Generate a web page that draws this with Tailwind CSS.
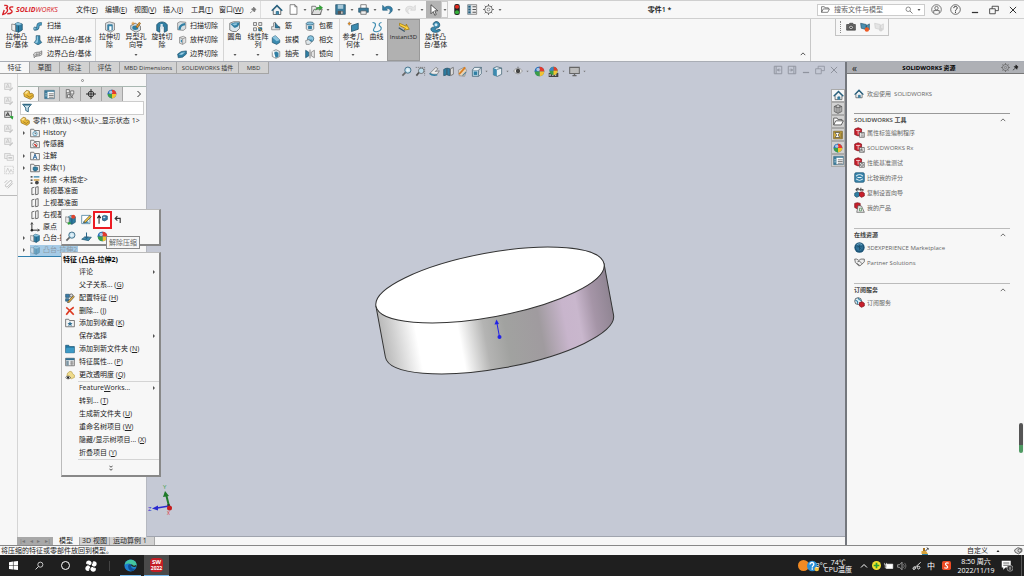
<!DOCTYPE html>
<html lang="zh-CN">
<head>
    <meta charset="UTF-8">
    <meta name="viewport" content="width=device-width, initial-scale=1.0">
    <title>SOLIDWORKS - 零件1</title>
    <script src="https://cdn.jsdelivr.net/npm/@tailwindcss/browser@4"></script>
</head>
<body class="flex flex-col h-screen overflow-hidden bg-[#f7f7f7] text-[#222] text-[7px] leading-[8px] font-['Open_Sans','Noto_Sans_CJK_SC',sans-serif]">

    <!-- icon sprite -->
    <svg class="hidden">
        <defs>
            <symbol id="box" viewBox="0 0 16 16"><path d="M5 4l4-2 6 2v8l-5 3-5-2z" fill="#2f7ea3" stroke="#1d4f68"/><path d="M5 4l5 2 5-2-6-2z" fill="#8cc4de"/><path d="M10 6v9" stroke="#1d4f68"/><path d="M1 4l5 1v9l-5-2z" fill="#eee" stroke="#777"/></symbol>
            <symbol id="box-grey" viewBox="0 0 16 16"><path d="M4 4l6-2 4 2v8l-5 3-5-2z" fill="#e4e4e4" stroke="#777"/><path d="M4 4l5 2 5-2M9 6v9" fill="none" stroke="#777"/><path d="M6 7l2 1v4l-2-1z" fill="#3b8bb0"/></symbol>
            <symbol id="sweep" viewBox="0 0 16 16"><path d="M2 12c5 2 6-1 6-4s2-4 6-3" fill="none" stroke="#235e7b" stroke-width="5"/><path d="M2 12c5 2 6-1 6-4s2-4 6-3" fill="none" stroke="#4d9cc0" stroke-width="3"/><ellipse cx="3" cy="12" rx="2" ry="2.500" fill="#8cc4de" stroke="#235e7b"/></symbol>
            <symbol id="loft" viewBox="0 0 16 16"><path d="M5 1h6v7l3 4-6 4-6-4 3-4z" fill="#3b8bb0" stroke="#1d4f68"/><path d="M6 2h2v9l-2 2-3-1 3-4z" fill="#8cc4de"/></symbol>
            <symbol id="boundary" viewBox="0 0 16 16"><path d="M1 8c4-5 9-1 13-5v6c-4 4-9 0-12 5z" fill="#ddd" stroke="#555"/><path d="M2 11c4-4 8-1 12-5M6 6v6M10 5v6" fill="none" stroke="#777"/></symbol>
            <symbol id="cut" viewBox="0 0 16 16"><path d="M2 3l5-2 7 2v9l-5 3-7-3z" fill="#d8dfe3" stroke="#777"/><path d="M5 5h6v7H5z" fill="#3b8bb0" stroke="#2f6f92"/><path d="M7 7h3v5H7z" fill="#fff"/></symbol>
            <symbol id="hole" viewBox="0 0 16 16"><path d="M1 6l6-3 7 4v5l-6 3-7-4z" fill="#d8dfe3" stroke="#666"/><ellipse cx="7" cy="9" rx="4" ry="3" fill="#2f7ea3"/><path d="M8 8l4-6 2 1-4 6z" fill="#eda23a" stroke="#8b5b16"/><path d="M4 1v5M2 3h5" stroke="#e28a1c"/></symbol>
            <symbol id="revcut" viewBox="0 0 16 16"><path d="M1 13V5c3-5 11-5 14 0v8l-4 2V8c-1-2-5-2-6 0v7z" fill="#2f7ea3" stroke="#1d4f68"/><path d="M6 4h3v7H6z" fill="#d8e6ee"/></symbol>
            <symbol id="sweepcut" viewBox="0 0 16 16"><path d="M1 3l4-2 9 1v10l-4 3-9-1z" fill="#d8dfe3" stroke="#666"/><path d="M4 14c0-6 2-8 9-9" fill="none" stroke="#2f7ea3" stroke-width="4"/></symbol>
            <symbol id="boundcut" viewBox="0 0 16 16"><path d="M1 8l6-4 8-1v5l-6 5-7 1z" fill="#2f7ea3" stroke="#1d4f68"/><path d="M3 9l4-3 6-1-5 4z" fill="#9fd0e6"/></symbol>
            <symbol id="fillet" viewBox="0 0 16 16"><path d="M1 3l5-2h8v9l-4 4H5L1 12z" fill="#dce6ec" stroke="#666"/><path d="M2 4l5-2h7c0 4-3 7-7 7z" fill="#2f7ea3"/><path d="M4 4l4-1h3c0 2-2 3-4 3z" fill="#8cc4de"/></symbol>
            <symbol id="pattern" viewBox="0 0 16 16"><path d="M2 2h4v4H2zM9 2h4v4H9zM2 9h4v4H2z" fill="#e4e4e4" stroke="#666"/><path d="M9 9h4v4H9z" fill="#2f7ea3" stroke="#1d4f68"/><path d="M7 7l8 8" stroke="#e28a1c"/></symbol>
            <symbol id="rib" viewBox="0 0 16 16"><path d="M1 14V9h3V3l3-1v7h7v5z" fill="#e4e4e4" stroke="#666"/><path d="M7 3l7 8H7z" fill="#2f7ea3" stroke="#1d4f68"/></symbol>
            <symbol id="draft" viewBox="0 0 16 16"><path d="M2 4l5-3 7 7v4l-5 3-7-3z" fill="#3b8bb0" stroke="#1d4f68"/><path d="M2 4l5-3 7 7-5 2z" fill="#8cc4de"/></symbol>
            <symbol id="shell" viewBox="0 0 16 16"><path d="M2 4l6-3 6 3v8l-6 3-6-3z" fill="#dfe7eb" stroke="#666"/><path d="M5 6l3-2 4 2v6l-4 2-3-2z" fill="#2f7ea3"/><path d="M3 3l3 10" stroke="#fff" stroke-width="2"/></symbol>
            <symbol id="wrap" viewBox="0 0 16 16"><path d="M2 4v8c0 4 12 4 12 0V4" fill="#dce6ec" stroke="#555"/><ellipse cx="8" cy="4" rx="6" ry="2.500" fill="#8cc4de" stroke="#1d4f68"/><path d="M5 8h6v5H5z" fill="#2f7ea3"/></symbol>
            <symbol id="intersect" viewBox="0 0 16 16"><circle cx="9" cy="6" r="5" fill="#8cc4de" stroke="#1d4f68"/><path d="M1 9l6-2 4 4-4 4H2z" fill="#dfe7eb" stroke="#666"/><path d="M6 8l5-1-1 4z" fill="#2f7ea3"/></symbol>
            <symbol id="mirror" viewBox="0 0 16 16"><path d="M1 2l5 3v6l-5 3z" fill="#2f7ea3" stroke="#1d4f68"/><path d="M15 2l-5 3v6l5 3z" fill="#e4e4e4" stroke="#666"/><path d="M8 1v14" stroke="#444"/></symbol>
            <symbol id="refgeo" viewBox="0 0 16 16"><path d="M6 6l9-3v8l-9 3z" fill="#3b8bb0" stroke="#1d4f68"/><path d="M3 1v5M1 3.500h5" stroke="#444"/><circle cx="3" cy="3.500" r="1.500" fill="#e28a1c"/></symbol>
            <symbol id="curve" viewBox="0 0 16 16"><path d="M2 2c6 0 4 5 2 8s0 5 5 4 6-5 3-7 0-5 2-5" fill="none" stroke="#3b8bb0" stroke-width="1.500"/></symbol>
            <symbol id="instant" viewBox="0 0 16 16"><path d="M2 3l9 4V4l4 7-7 1 2-2-8-4z" fill="#ffd33d" stroke="#a07a10"/><path d="M1 9l8 5" stroke="#34546a" stroke-width="1.500"/></symbol>
            <symbol id="revolve" viewBox="0 0 16 16"><path d="M4 5a4.500 4.500 0 1 1 8 3c-2 2-5 1-5 3s3 1 5 0l2 1c-2 4-10 4-12 1s0-5 4-5" fill="#3b8bb0" stroke="#1d4f68"/><circle cx="8" cy="5" r="2" fill="#d6eaf4"/></symbol>
            <symbol id="home" viewBox="0 0 16 16"><path d="M3 8v6h10V8L8 3z" fill="#eef3f6" stroke="#444"/><path d="M1 9l7-7 7 7" fill="none" stroke="#25607f" stroke-width="2"/><path d="M7 14v-4h3v4" fill="#3b8bb0" stroke="#25607f"/></symbol>
            <symbol id="doc" viewBox="0 0 16 16"><path d="M3 1h7l3 3v11H3z" fill="#fff" stroke="#555"/><path d="M10 1v3h3" fill="none" stroke="#555"/></symbol>
            <symbol id="open" viewBox="0 0 16 16"><path d="M1 14V3h5l1 2h6v9z" fill="#eee" stroke="#555"/><path d="M1 14l3-7h11l-3 7z" fill="#ddd" stroke="#555"/><path d="M6 9c0-4 2-5 5-5V1l5 4-5 4V6c-2 0-3 1-5 3z" fill="#35a03a"/></symbol>
            <symbol id="save" viewBox="0 0 16 16"><path d="M1 1h14v14H1z" fill="#397b9c" stroke="#254f65"/><path d="M4 1h8v6H4z" fill="#a8c8d8"/><path d="M4 10h8v5H4z" fill="#555"/><path d="M9 11h2v3H9z" fill="#ddd"/></symbol>
            <symbol id="print" viewBox="0 0 16 16"><path d="M4 6V1h8v5" fill="#fff" stroke="#555"/><path d="M1 6h14v6H1z" fill="#397b9c" stroke="#254f65"/><path d="M4 10h8v5H4z" fill="#eee" stroke="#555"/></symbol>
            <symbol id="undo" viewBox="0 0 16 16"><path d="M1 2v7h7L6 7c3-1 6 0 6 3 0 2-1 3-2 4 3-1 5-3 5-6 0-5-7-6-11-3z" fill="#3580a8" stroke="#24607f"/></symbol>
            <symbol id="redo" viewBox="0 0 16 16"><path d="M15 2v7H8l2-2c-3-1-6 0-6 3 0 2 1 3 2 4-3-1-5-3-5-6 0-5 7-6 11-3z" fill="#e6e6e6" stroke="#d0d0d0"/></symbol>
            <symbol id="cursor" viewBox="0 0 16 16"><path d="M4 1v12l3-3 2 5 2-1-2-5h4z" fill="#fff" stroke="#333"/></symbol>
            <symbol id="light" viewBox="0 0 16 16"><rect x="4" y="0" width="8" height="16" rx="3" fill="#222"/><circle cx="8" cy="4" r="3" fill="#e32b20"/><circle cx="8" cy="12" r="3" fill="#35b03a"/></symbol>
            <symbol id="form" viewBox="0 0 16 16"><path d="M1 2h14v12H1z" fill="#fff" stroke="#3b5f73"/><path d="M1 2h14v2H1zM1 4h4v10H1z" fill="#3a7a99"/><path d="M7 7h7M7 9.500h7M7 12h7" stroke="#444"/><path d="M2 7h2M2 10h2" stroke="#fff"/></symbol>
            <symbol id="options" viewBox="0 0 16 16"><path d="M1 1h13v14H1z" fill="#eee" stroke="#666"/><path d="M1 1h5v14H1z" fill="#8fa9b8"/><path d="M2 4h3M2 8h3M2 12h3" stroke="#24607f" stroke-width="2"/><path d="M8 4h5M8 8h5M8 12h5" stroke="#555" stroke-width="1.500"/></symbol>
            <symbol id="gear" viewBox="0 0 16 16"><circle cx="8" cy="8" r="5.500" fill="none" stroke="#666" stroke-width="1.300"/><circle cx="8" cy="8" r="2" fill="none" stroke="#666"/><path d="M8 0v3M8 13v3M0 8h3M13 8h3M2.500 2.500l2 2M11.500 11.500l2 2M13.500 2.500l-2 2M4.500 11.500l-2 2" stroke="#666" stroke-width="1.300"/></symbol>
            <symbol id="folder" viewBox="0 0 16 16"><path d="M1 13V3h5l1 2h6v2M1 13l3-6h11l-3 6z" fill="#fff" stroke="#555" stroke-width="1.300"/></symbol>
            <symbol id="magnify" viewBox="0 0 16 16"><circle cx="6.500" cy="6.500" r="4.500" fill="none" stroke="currentColor" stroke-width="1.300"/><path d="M10 10l5 5" stroke="currentColor" stroke-width="1.500"/></symbol>
            <symbol id="user" viewBox="0 0 16 16"><circle cx="8" cy="8" r="7" fill="none" stroke="#444"/><circle cx="8" cy="6" r="2.500" fill="none" stroke="#444"/><path d="M4 13V9.500h8V13" fill="none" stroke="#444"/></symbol>
            <symbol id="help" viewBox="0 0 16 16"><circle cx="8" cy="8" r="7" fill="none" stroke="#333"/><path d="M5.500 6c0-4 5.500-3 5 0-.5 2-2.500 2-2.500 4M8 11v2" fill="none" stroke="#333" stroke-width="1.400"/></symbol>
            <symbol id="min" viewBox="0 0 16 16"><path d="M3 12h10" stroke="currentColor" stroke-width="2"/></symbol>
            <symbol id="restore" viewBox="0 0 16 16"><path d="M5 6V2h10v7h-5M1 6h9v8H1z" fill="none" stroke="currentColor" stroke-width="1.300"/></symbol>
            <symbol id="close" viewBox="0 0 16 16"><path d="M3 3l10 10M13 3L3 13" stroke="currentColor" stroke-width="1.600"/></symbol>
            <symbol id="dock" viewBox="0 0 16 16"><path d="M2 2h12v12H2z" fill="none" stroke="currentColor" stroke-width="1.500"/><path d="M5 2v12M12 8H7m3-2L7 8l3 2" fill="none" stroke="currentColor" stroke-width="1.500"/></symbol>
            <symbol id="camera" viewBox="0 0 16 16"><path d="M1 4h4l1-2h5l1 2h3v9H1z" fill="#666" stroke="#333"/><circle cx="8" cy="8.500" r="3.500" fill="#ddd" stroke="#222"/><circle cx="8" cy="8.500" r="1.500" fill="#333"/></symbol>
            <symbol id="record" viewBox="0 0 16 16"><path d="M1 2l9 2v8L2 10zM10 6l5-3v9l-5-2z" fill="#4b8fb0" stroke="#254f65"/><circle cx="11" cy="12" r="3.500" fill="#ee5a24"/></symbol>
            <symbol id="record-off" viewBox="0 0 16 16"><path d="M1 2l9 2v8L2 10zM10 6l5-3v9l-5-2z" fill="#e4e4e4" stroke="#ccc"/><circle cx="11" cy="12" r="3" fill="#d4d4d4"/></symbol>
            <symbol id="zoomfit" viewBox="0 0 16 16"><path d="M7 9l-5 5" stroke="#666" stroke-width="2.500"/><circle cx="10" cy="6" r="4.500" fill="#bcdcec" stroke="#3d6b84" stroke-width="1.300"/><path d="M10 3v6M7 6h6" stroke="#fff"/></symbol>
            <symbol id="zoomarea" viewBox="0 0 16 16"><path d="M1 2h13v12" fill="none" stroke="#666" stroke-dasharray="2 1"/><path d="M6 9l-4 5" stroke="#555" stroke-width="2.500"/><circle cx="9" cy="7" r="4" fill="#bcdcec" stroke="#555"/></symbol>
            <symbol id="prevview" viewBox="0 0 16 16"><path d="M1 11l9-9 3 2-4 4 6-1-3 5H6z" fill="#eee" stroke="#666"/><path d="M1 11c3 3 6 3 11 2" fill="none" stroke="#2f7ea3" stroke-width="2"/></symbol>
            <symbol id="section" viewBox="0 0 16 16"><path d="M1 5l4-2v10l-4 1zM6 3l4 1v10l-4-1z" fill="#2f7ea3" stroke="#254f65"/><path d="M11 4l4-2v10l-4 2z" fill="#e4e4e4" stroke="#555"/></symbol>
            <symbol id="dynannot" viewBox="0 0 16 16"><path d="M2 6l8-4 4 4-3 9-8-1z" fill="#e6d3b8" stroke="#888"/><path d="M3 12L12 2" stroke="#d97b1c" stroke-width="2.500"/><path d="M8 14l5-5" stroke="#4d7f9a" stroke-width="1.500"/></symbol>
            <symbol id="orient" viewBox="0 0 16 16"><path d="M2 6h9v9H2z" fill="#b7d6e6" stroke="#33576b"/><path d="M2 6l3-4h10l-4 4M15 2v9l-4 4" fill="#e8eef2" stroke="#33576b"/><path d="M4 8h5v5H4z" fill="#2f7ea3"/></symbol>
            <symbol id="cube" viewBox="0 0 16 16"><path d="M2 3l5-2 7 2v9l-6 3-6-2z" fill="#e8eef2" stroke="#33576b"/><path d="M2 3l5 2v10l-5-2z" fill="#3b8bb0"/><path d="M7 5l7-2" stroke="#33576b"/></symbol>
            <symbol id="eye" viewBox="0 0 16 16"><path d="M1 8c4-6 10-6 14 0-4 6-10 6-14 0z" fill="#eee" stroke="#777"/><circle cx="8" cy="8" r="3.500" fill="#444"/><path d="M8 1v3" stroke="#555"/></symbol>
            <symbol id="ball" viewBox="0 0 16 16"><circle cx="8" cy="8" r="7" fill="#2f74b5"/><path d="M8 8V1a7 7 0 0 0-7 7z" fill="#2b70b8"/><path d="M8 8V1a7 7 0 0 1 7 7z" fill="#e23b2e"/><path d="M8 8h7a7 7 0 0 1-7 7z" fill="#f1c232"/><path d="M8 8v7a7 7 0 0 1-7-7z" fill="#3c9e47"/><circle cx="6" cy="5" r="2.500" fill="#fff" opacity=".6"/></symbol>
            <symbol id="scene" viewBox="0 0 16 16"><path d="M1 10h14v6H1z" fill="#444"/><path d="M2 12h2v2H2zM6 12h2v2H6zM10 12h2v2h-2z" fill="#ddd"/><circle cx="8" cy="7" r="6" fill="#3c9e47"/><path d="M8 7V1a6 6 0 0 1 6 6z" fill="#e23b2e"/><path d="M8 7V1a6 6 0 0 0-6 6z" fill="#3d86c6"/><path d="M8 7h6a6 6 0 0 1-6 6z" fill="#f1c232"/></symbol>
            <symbol id="monitor" viewBox="0 0 16 16"><path d="M1 2h14v9H1z" fill="#bbb" stroke="#666" stroke-width="1.500"/><path d="M5 14h6M8 11v3" stroke="#666" stroke-width="2"/></symbol>
            <symbol id="lib" viewBox="0 0 16 16"><path d="M2 4l6-3 6 3v8l-6 3-6-3z" fill="#ccc" stroke="#444"/><path d="M2 4l6 2 6-2M8 6v9M5 2.500v11M11 2.500v11" fill="none" stroke="#444"/></symbol>
            <symbol id="viewpal" viewBox="0 0 16 16"><path d="M1 2h14v12H1z" fill="#d9b240" stroke="#665012"/><path d="M3 4h8L8 8l3 4H3l3-4z" fill="#fff" stroke="#333"/><path d="M13 4v9" stroke="#333"/></symbol>
            <symbol id="part" viewBox="0 0 16 16"><path d="M1 6l4-4 4 1 1 4 3-1 2 2v4l-4 3-9-4z" fill="#e9b93a" stroke="#8d6813"/><path d="M2 6l4-3 2 1-3 3z" fill="#fbe7a4"/><path d="M5 9l5 3 4-3" fill="none" stroke="#8d6813"/></symbol>
            <symbol id="config" viewBox="0 0 16 16"><path d="M2 1h5v5H2zM9 3h5v5H9zM4 9h4v5H4z" fill="#eee" stroke="#444"/><path d="M7 7l6 8M13 9l-4 6M2 6v9" stroke="#444"/></symbol>
            <symbol id="target" viewBox="0 0 16 16"><circle cx="8" cy="8" r="4.500" fill="none" stroke="#222" stroke-width="1.500"/><path d="M8 0v16M0 8h16" stroke="#222" stroke-width="1.500"/></symbol>
            <symbol id="funnel" viewBox="0 0 16 16"><path d="M1 2h14l-5 6v6l-4-2V8z" fill="#cfe4ee" stroke="#235e7b" stroke-width="1.500"/><path d="M3 3h10" stroke="#235e7b" stroke-width="2"/></symbol>
            <symbol id="fbase" viewBox="0 0 16 16"><path d="M1 14V2h5l1 2h8v10z" fill="#f4f4f4" stroke="#555" stroke-width="1.200"/></symbol>
            <symbol id="history" viewBox="0 0 16 16"><use href="#fbase"/><circle cx="8" cy="9" r="3.500" fill="#dcecf4" stroke="#2f7ea3"/><path d="M8 7v2h2" fill="none" stroke="#333"/></symbol>
            <symbol id="sensor" viewBox="0 0 16 16"><use href="#fbase"/><circle cx="8" cy="9" r="3.500" fill="#fff" stroke="#444"/><path d="M7 8l4 4" stroke="#d2281e" stroke-width="2"/></symbol>
            <symbol id="annot" viewBox="0 0 16 16"><use href="#fbase"/><path d="M5 13l3-8 3 8M6 10h4" fill="none" stroke="#215f96" stroke-width="1.400"/></symbol>
            <symbol id="solid" viewBox="0 0 16 16"><use href="#fbase"/><path d="M5 7l3-1 4 1v4l-4 2-3-2z" fill="#2f7ea3" stroke="#1d4f68"/></symbol>
            <symbol id="material" viewBox="0 0 16 16"><path d="M1 3h3M1 8h3M1 13h3" stroke="#222" stroke-width="2"/><path d="M6 3h9" stroke="#2f7ea3" stroke-width="2"/><path d="M6 8h9" stroke="#c98c22" stroke-width="2"/><circle cx="11" cy="12" r="3" fill="#444"/></symbol>
            <symbol id="plane" viewBox="0 0 16 16"><path d="M7 13l-4 1V3l4-1M9 2l4-1v12l-4 1z" fill="none" stroke="#444" stroke-width="1.200"/></symbol>
            <symbol id="origin" viewBox="0 0 16 16"><path d="M3 1v12h12" fill="none" stroke="#222" stroke-width="1.500"/><path d="M1 4l2-3 2 3M12 11l3 2-3 2" fill="none" stroke="#222"/><circle cx="3" cy="13" r="2" fill="#222"/></symbol>
            <symbol id="note" viewBox="0 0 16 16"><path d="M1 2h10v10H1z" fill="#eee" stroke="#bbb"/><path d="M3 10l3-7 3 7M4 8h4" fill="none" stroke="#bbb"/><path d="M9 14l5-5" stroke="#c4c4c4" stroke-width="2"/></symbol>
            <symbol id="note-on" viewBox="0 0 16 16"><path d="M1 2h11v10H1z" fill="#ddd" stroke="#444"/><path d="M3 10l3-6 3 6M4 8h4" fill="none" stroke="#222" stroke-width="1.300"/><path d="M9 9l6 1-1 5-2-1z" fill="#2fa43a"/></symbol>
            <symbol id="note-stack" viewBox="0 0 16 16"><path d="M1 4h9v8H1z" fill="#eee" stroke="#bbb"/><path d="M5 7h10v8H5z" fill="#f4f4f4" stroke="#bbb"/><path d="M7 11h6" stroke="#bbb" stroke-width="2"/></symbol>
            <symbol id="note-dash" viewBox="0 0 16 16"><path d="M1 2h14v12H1z" fill="none" stroke="#bbb" stroke-dasharray="2 1"/><path d="M3 12l3-7 3 7 2-5 3 5" fill="none" stroke="#bbb"/></symbol>
            <symbol id="clip" viewBox="0 0 16 16"><path d="M3 9l6-6c3-2 5 1 3 3l-6 6c-3 2-5-1-3-3zM6 15l8-8M1 6l4-4" fill="none" stroke="#bbb" stroke-width="1.500"/></symbol>
            <symbol id="editfeat" viewBox="0 0 16 16"><use href="#box"/><circle cx="12" cy="4" r="3" fill="#e0442e"/><path d="M4 14l4-1" stroke="#2fa43a" stroke-width="3"/></symbol>
            <symbol id="editsketch" viewBox="0 0 16 16"><path d="M1 2h12v12H1z" fill="#fff" stroke="#2f6f92"/><path d="M3 11h8v2H3z" fill="#3b8bb0"/><path d="M5 10l8-8 2 2-8 8-3 1z" fill="#f1c232" stroke="#444"/></symbol>
            <symbol id="unsuppress" viewBox="0 0 16 16"><path d="M3 14V3M0.500 6L3 2l2.500 4" fill="none" stroke="#222" stroke-width="1.500"/><path d="M8 3l3-1 4 1v5l-4 2-3-1z" fill="#3b7ba8" stroke="#1d4f68"/><path d="M9 4h3v2H9z" fill="#cfe4ee"/></symbol>
            <symbol id="rollback" viewBox="0 0 16 16"><path d="M6 2L2 6l4 4M2 6h9v8" fill="none" stroke="#333" stroke-width="2"/></symbol>
            <symbol id="normal" viewBox="0 0 16 16"><path d="M1 12l4-3h10l-4 5z" fill="#3b8bb0" stroke="#1d4f68"/><path d="M8 11V2M5.500 8L8 11l2.500-3" fill="none" stroke="#2b6688" stroke-width="1.500"/></symbol>
            <symbol id="configfeat" viewBox="0 0 16 16"><path d="M1 2h6v5H1zM1 9h5v4H1z" fill="#3b7ba8" stroke="#1d4f68"/><path d="M5 13L13 4l2 2-8 9-3 1z" fill="#e8b13d" stroke="#444"/><circle cx="10" cy="4" r="2.500" fill="#ddd" stroke="#333"/></symbol>
            <symbol id="delete" viewBox="0 0 16 16"><path d="M2 2c4 3 8 8 12 12M14 2C9 5 5 9 2 14" fill="none" stroke="#dd3a22" stroke-width="2.500"/></symbol>
            <symbol id="fav" viewBox="0 0 16 16"><use href="#fbase"/><path d="M8 5l1.300 3H12l-2 2 .7 3L8 11.300 5.300 13l.7-3-2-2h2.700z" fill="#2f6f92"/></symbol>
            <symbol id="bluefolder" viewBox="0 0 16 16"><path d="M1 14V2h5l1 2h8v10z" fill="#2377a3" stroke="#154e6d"/><path d="M2 6h13l-1 8H1z" fill="#3d9ac6"/></symbol>
            <symbol id="props" viewBox="0 0 16 16"><path d="M1 2h14v12H1z" fill="#eee" stroke="#444"/><path d="M1 2h14v3H1z" fill="#2f6f92"/><path d="M2 6h4v8H2z" fill="#7d96a4"/><path d="M8 8h6M8 11h6M11 6v8" stroke="#666"/></symbol>
            <symbol id="transp" viewBox="0 0 16 16"><path d="M4 5l4-3 3 1 1 3 3 2v4l-5 2-7-4z" fill="#f0dc8c" stroke="#b49a42"/><path d="M1 12c2-3 6-3 8 0-2 3-6 3-8 0z" fill="#eee" stroke="#333"/><circle cx="5" cy="12" r="1.800" fill="#222"/></symbol>
            <symbol id="red" viewBox="0 0 16 16"><path d="M1 3l5-2 5 2v8l-5 2-5-2z" fill="#c8202c" stroke="#7d0f17"/><path d="M3 5h6M6 5v6" stroke="#fff"/><path d="M8 8h7v7H8z" fill="#eee" stroke="#555"/></symbol>
            <symbol id="redtab" viewBox="0 0 16 16"><use href="#red"/><path d="M10 10h4M10 13h4" stroke="#555"/></symbol>
            <symbol id="redrx" viewBox="0 0 16 16"><use href="#red"/><path d="M10 14v-4h2l-1 2 3 2" fill="none" stroke="#444"/></symbol>
            <symbol id="redgauge" viewBox="0 0 16 16"><use href="#red"/><circle cx="11.500" cy="11.500" r="2" fill="none" stroke="#444"/></symbol>
            <symbol id="compare" viewBox="0 0 16 16"><rect x="1" y="1" width="14" height="14" rx="2" fill="#3985ab" stroke="#1d5575"/><path d="M3 6c4-3 6-3 10 0M3 10c4 3 6 3 10 0M5 8h6" fill="none" stroke="#e6f3f9" stroke-width="1.500"/></symbol>
            <symbol id="copyset" viewBox="0 0 16 16"><path d="M1 9l4-2 3 2v4l-4 2-3-2z" fill="#2f7ea3" stroke="#1d4f68"/><path d="M8 8l4-1 3 2v4l-4 2-3-2z" fill="#c8202c" stroke="#7d0f17"/><path d="M4 6V2h3M10 1v5M13 3v3M2 4h11" fill="none" stroke="#333" stroke-width="1.300"/></symbol>
            <symbol id="products" viewBox="0 0 16 16"><path d="M1 2l4-1 4 1v6l-4 2-4-2z" fill="#c8202c" stroke="#7d0f17"/><path d="M6 5l5 1 4 9H4z" fill="#e8e8e8" stroke="#555"/><path d="M8 9h3v4H8z" fill="none" stroke="#4c8d52"/></symbol>
            <symbol id="globe" viewBox="0 0 16 16"><circle cx="8" cy="8" r="7.500" fill="#1d5578"/><circle cx="8" cy="8" r="5" fill="#2f7299"/><path d="M4 7h8M8 4v8M5 5l6 6" stroke="#1a4a66"/><path d="M4 4c3-2 5-2 8 0" fill="none" stroke="#9ccbe2"/></symbol>
            <symbol id="hands" viewBox="0 0 16 16"><path d="M1 3h3l3 2 3-2h5v4l-5 5-3 1-5-5z" fill="#eee" stroke="#444"/><path d="M5 7l3-1 4 4M4 9l4 3" fill="none" stroke="#444"/></symbol>
            <symbol id="subs" viewBox="0 0 16 16"><circle cx="6" cy="6" r="5" fill="#dcecf4" stroke="#333"/><path d="M2 5c3 0 4 2 3 5M6 1c0 3 2 3 5 4" fill="none" stroke="#2f7ea3" stroke-width="1.500"/><path d="M8 8l4-1 3 2v4l-4 2-3-2z" fill="#c8202c" stroke="#7d0f17"/></symbol>
            <symbol id="pin" viewBox="0 0 16 16"><path d="M9 2l5 5-2 1-1 4-6-6 4-1zM7 10l-5 4" fill="currentColor" stroke="currentColor" stroke-width="1.500"/></symbol>
            <symbol id="up" viewBox="0 0 16 16"><path d="M2 11l6-6 6 6" fill="none" stroke="currentColor" stroke-width="2"/></symbol>
            <symbol id="down" viewBox="0 0 8 8"><path d="M1 2h6L4 6z" fill="currentColor"/></symbol>
            <symbol id="tri" viewBox="0 0 8 8"><path d="M2 0v8l4-4z" fill="#555"/></symbol>
        </defs>
    </svg>

    <!-- title bar -->
    <header class="flex items-center h-[19px] shrink-0 border-t border-b border-[#cfcfcf] bg-[#f7f7f7]">
        <div class="flex items-center w-[76px] pl-[2px] gap-[2px] text-[#d8242a]">
            <svg class="w-3 h-3" viewBox="0 0 16 16"><path d="M3 2c5-1 6 2 2 4M6 6c3 1 1 7-5 8l2-6M15 4c-5-1-6 2-3 4s1 5-5 5" fill="none" stroke="#d8242a" stroke-width="1.800"/></svg>
            <div class="italic text-[7px]"><b>SOLID</b>WORKS</div>
        </div>
        <nav class="flex">
            <button class="w-[29px] text-left">文件(<u>F</u>)</button>
            <button class="w-[29px] text-left">编辑(<u>E</u>)</button>
            <button class="w-[29px] text-left">视图(<u>V</u>)</button>
            <button class="w-[28px] text-left">插入(<u>I</u>)</button>
            <button class="w-[28px] text-left">工具(<u>T</u>)</button>
            <button class="w-[30px] text-left">窗口(<u>W</u>)</button>
        </nav>
        <svg class="w-2 h-2 text-[#777]"><use href="#pin"/></svg>
        <div class="flex items-center h-full ml-[3px] pl-[10px] border-l border-[#ddd] text-[#666]">
            <button class="w-[17px]" aria-label="主页"><svg class="w-3 h-3"><use href="#home"/></svg></button>
            <button class="flex items-center gap-1 w-[23px]" aria-label="新建"><svg class="w-[11px] h-[11px]"><use href="#doc"/></svg><svg class="w-1 h-1"><use href="#down"/></svg></button>
            <button class="flex items-center gap-[3px] w-6" aria-label="打开"><svg class="w-3 h-3"><use href="#open"/></svg><svg class="w-1 h-1"><use href="#down"/></svg></button>
            <button class="flex items-center gap-1 w-[23px]" aria-label="保存"><svg class="w-[11px] h-[11px]"><use href="#save"/></svg><svg class="w-1 h-1"><use href="#down"/></svg></button>
            <button class="flex items-center gap-1 w-6" aria-label="打印"><svg class="w-[11px] h-[11px]"><use href="#print"/></svg><svg class="w-1 h-1"><use href="#down"/></svg></button>
            <button class="flex items-center gap-1 w-[23px]" aria-label="撤消"><svg class="w-[11px] h-[11px]"><use href="#undo"/></svg><svg class="w-1 h-1"><use href="#down"/></svg></button>
            <button class="flex items-center gap-1 w-[21px]" aria-label="重做"><svg class="w-[11px] h-[11px]"><use href="#redo"/></svg><svg class="w-1 h-1"><use href="#down"/></svg></button>
            <button class="flex items-center justify-center w-[15px] h-full bg-[#b4b4b4]" aria-label="选择"><svg class="w-3 h-3"><use href="#cursor"/></svg></button>
            <button class="flex items-center justify-center w-[7px] h-full border border-[#ccc]" aria-label="选择选项"><svg class="w-1 h-1"><use href="#down"/></svg></button>
            <button class="w-4 ml-[3px]" aria-label="重建模型"><svg class="w-3 h-[11px]"><use href="#light"/></svg></button>
            <button class="w-4" aria-label="文件属性"><svg class="w-[11px] h-[11px]"><use href="#options"/></svg></button>
            <button class="flex items-center gap-1" aria-label="选项"><svg class="w-[11px] h-[11px]"><use href="#gear"/></svg><svg class="w-1 h-1"><use href="#down"/></svg></button>
        </div>
        <h1 class="flex-1 text-center font-semibold">零件1 *</h1>
        <label class="flex items-center gap-1 w-[108px] h-3 px-[3px] bg-white border border-[#ccc] text-[#555]">
            <svg class="w-[9px] h-[9px] shrink-0"><use href="#folder"/></svg>
            <input class="flex-1 min-w-0 h-[10px] outline-none placeholder:text-[#666]" type="text" placeholder="搜索文件与模型" aria-label="搜索文件与模型">
            <svg class="w-2 h-2 shrink-0"><use href="#magnify"/></svg>
            <svg class="w-1 h-1 shrink-0"><use href="#down"/></svg>
        </label>
        <div class="flex items-center gap-2 px-[6px] text-[#333]">
            <button aria-label="登录"><svg class="w-[11px] h-[11px]"><use href="#user"/></svg></button>
            <button aria-label="帮助"><svg class="w-[11px] h-[11px]"><use href="#help"/></svg></button>
            <button class="px-px" aria-label="最小化"><svg class="w-[10px] h-[10px]"><use href="#min"/></svg></button>
            <button class="pr-px" aria-label="还原"><svg class="w-[10px] h-[10px]"><use href="#restore"/></svg></button>
            <button aria-label="关闭"><svg class="w-[10px] h-[10px]"><use href="#close"/></svg></button>
        </div>
    </header>

    <!-- ribbon -->
    <section class="flex h-[43px] shrink-0 border-b border-[#a9adb5]">
        <div class="flex flex-1 border-r border-[#c8c8c8]">
            <button class="flex flex-col items-center w-[33px] pt-[2px]"><svg class="w-3 h-3"><use href="#box"/></svg>拉伸凸<br>台/基体</button>
            <div class="flex flex-col justify-around w-[63px] border-r border-[#d5d5d5]">
                <button class="flex items-center gap-1"><svg class="w-[10px] h-[10px]"><use href="#sweep"/></svg>扫描</button>
                <button class="flex items-center gap-1"><svg class="w-[10px] h-[10px]"><use href="#loft"/></svg>放样凸台/基体</button>
                <button class="flex items-center gap-1"><svg class="w-[10px] h-[10px]"><use href="#boundary"/></svg>边界凸台/基体</button>
            </div>
            <button class="flex flex-col items-center w-[27px] pt-[2px]"><svg class="w-3 h-3"><use href="#cut"/></svg>拉伸切<br>除</button>
            <button class="flex flex-col items-center w-[26px] pt-[2px]"><svg class="w-3 h-3"><use href="#hole"/></svg>异型孔<br>向导<svg class="w-1 h-1 mt-1 text-[#555]"><use href="#down"/></svg></button>
            <button class="flex flex-col items-center w-[26px] pt-[2px]"><svg class="w-3 h-3"><use href="#revcut"/></svg>旋转切<br>除</button>
            <div class="flex flex-col justify-around w-[49px] pl-[2px] border-r border-[#d5d5d5]">
                <button class="flex items-center gap-[3px]"><svg class="w-[10px] h-[10px]"><use href="#sweepcut"/></svg>扫描切除</button>
                <button class="flex items-center gap-[3px]"><svg class="w-[10px] h-[10px]"><use href="#box-grey"/></svg>放样切除</button>
                <button class="flex items-center gap-[3px]"><svg class="w-[10px] h-[10px]"><use href="#boundcut"/></svg>边界切除</button>
            </div>
            <button class="flex flex-col items-center w-[21px] pt-[2px]"><svg class="w-3 h-3"><use href="#fillet"/></svg>圆角<svg class="w-1 h-1 mt-3 text-[#555]"><use href="#down"/></svg></button>
            <button class="flex flex-col items-center w-[26px] pt-[2px]"><svg class="w-3 h-3"><use href="#pattern"/></svg>线性阵<br>列<svg class="w-1 h-1 mt-1 text-[#555]"><use href="#down"/></svg></button>
            <div class="flex flex-col justify-around w-[34px]">
                <button class="flex items-center gap-1"><svg class="w-[10px] h-[10px]"><use href="#rib"/></svg>筋</button>
                <button class="flex items-center gap-1"><svg class="w-[10px] h-[10px]"><use href="#draft"/></svg>拔模</button>
                <button class="flex items-center gap-1"><svg class="w-[10px] h-[10px]"><use href="#shell"/></svg>抽壳</button>
            </div>
            <div class="flex flex-col justify-around w-[35px] border-r border-[#d5d5d5]">
                <button class="flex items-center gap-1"><svg class="w-[10px] h-[10px]"><use href="#wrap"/></svg>包覆</button>
                <button class="flex items-center gap-1"><svg class="w-[10px] h-[10px]"><use href="#intersect"/></svg>相交</button>
                <button class="flex items-center gap-1"><svg class="w-[10px] h-[10px]"><use href="#mirror"/></svg>镜向</button>
            </div>
            <button class="flex flex-col items-center w-[26px] pt-[2px]"><svg class="w-3 h-3"><use href="#refgeo"/></svg>参考几<br>何体<svg class="w-1 h-1 mt-1 text-[#555]"><use href="#down"/></svg></button>
            <button class="flex flex-col items-center w-[21px] pt-[2px]"><svg class="w-3 h-3"><use href="#curve"/></svg>曲线<svg class="w-1 h-1 mt-3 text-[#555]"><use href="#down"/></svg></button>
            <button class="flex flex-col items-center w-[33px] pt-px text-[6px] bg-[#b1b1b1] border border-[#999]"><svg class="w-3 h-3"><use href="#instant"/></svg>Instant3D</button>
            <button class="flex flex-col items-center w-[31px] pt-[2px]"><svg class="w-3 h-3"><use href="#revolve"/></svg>旋转凸<br>台/基体</button>
            <button class="self-end ml-auto mr-1 mb-1" aria-label="折叠"><svg class="w-[6px] h-[6px]"><use href="#up"/></svg></button>
        </div>
        <div class="flex items-start w-[213px] pl-6">
            <div class="flex items-center gap-1 h-[17px] px-1 border border-t-0 border-[#c4c4c4]">
                <span class="w-[2px] h-3 border-l border-dotted border-[#888]"></span>
                <button aria-label="捕获"><svg class="w-[10px] h-[10px]"><use href="#camera"/></svg></button>
                <button aria-label="录制"><svg class="w-[10px] h-[10px]"><use href="#record"/></svg></button>
                <button aria-label="停止" disabled><svg class="w-[10px] h-[10px]"><use href="#record-off"/></svg></button>
            </div>
        </div>
    </section>

    <main class="flex flex-1 min-h-0">
        <div class="flex flex-col flex-1 min-w-0 bg-[#c5c9d5]">
            <!-- command tabs and view toolbar -->
            <div class="relative z-10 flex h-3 shrink-0">
                <nav class="flex text-[#333] [&>button]:border-r [&>button]:border-b [&>button]:border-[#a5a5a5]">
                    <button class="w-[30px] bg-[#f7f7f7]">特征</button>
                    <button class="w-[30px] bg-[#d2d2d2]">草图</button>
                    <button class="w-[30px] bg-[#d2d2d2]">标注</button>
                    <button class="w-[30px] bg-[#d2d2d2]">评估</button>
                    <button class="w-[57px] bg-[#d2d2d2] text-[6px] whitespace-nowrap">MBD Dimensions</button>
                    <button class="w-[62px] bg-[#d2d2d2] text-[6px] whitespace-nowrap">SOLIDWORKS 插件</button>
                    <button class="w-[30px] bg-[#d2d2d2] text-[6px]">MBD</button>
                </nav>
                <div class="flex items-center h-[18px] ml-[132px] gap-[3px] text-[#777] [&>svg]:w-[11px] [&>svg]:h-[11px]">
                    <svg><use href="#zoomfit"/></svg>
                    <svg><use href="#zoomarea"/></svg>
                    <svg><use href="#prevview"/></svg>
                    <svg><use href="#section"/></svg>
                    <svg><use href="#dynannot"/></svg>
                    <button class="flex items-center gap-[3px] w-[18px]" aria-label="视图定向"><svg class="w-[11px] h-[11px]"><use href="#orient"/></svg><svg class="w-[3px] h-[3px]"><use href="#down"/></svg></button>
                    <button class="flex items-center gap-[3px] w-[18px]" aria-label="显示样式"><svg class="w-[11px] h-[11px]"><use href="#cube"/></svg><svg class="w-[3px] h-[3px]"><use href="#down"/></svg></button>
                    <button class="flex items-center gap-[3px] w-[18px]" aria-label="隐藏项目"><svg class="w-[10px] h-[10px]"><use href="#eye"/></svg><svg class="w-[3px] h-[3px]"><use href="#down"/></svg></button>
                    <svg><use href="#ball"/></svg>
                    <button class="flex items-center gap-[3px] w-[18px]" aria-label="布景"><svg class="w-[11px] h-[11px]"><use href="#scene"/></svg><svg class="w-[3px] h-[3px]"><use href="#down"/></svg></button>
                    <button class="flex items-center gap-[3px] w-[18px]" aria-label="视图设定"><svg class="w-[11px] h-[11px]"><use href="#monitor"/></svg><svg class="w-[3px] h-[3px]"><use href="#down"/></svg></button>
                </div>
                <div class="flex items-center h-4 ml-auto pr-[6px] gap-1 text-[#8f939e]">
                    <button aria-label="左侧"><svg class="w-[10px] h-[10px]"><use href="#dock"/></svg></button>
                    <button aria-label="右侧"><svg class="w-[10px] h-[10px] -scale-x-100"><use href="#dock"/></svg></button>
                    <button aria-label="最小化文档"><svg class="w-[10px] h-[10px]"><use href="#min"/></svg></button>
                    <button aria-label="还原文档"><svg class="w-[10px] h-[10px]"><use href="#restore"/></svg></button>
                    <button aria-label="关闭文档"><svg class="w-[10px] h-[10px]"><use href="#close"/></svg></button>
                </div>
            </div>

            <div class="flex flex-1 min-h-0">
                <!-- annotation toolbar -->
                <div class="w-[18px] bg-[#f7f7f7] border-r border-[#d5d5d5]">
                    <div class="flex flex-col items-center justify-between h-[122px] pt-2 pb-[6px] border-b border-[#bbb] [&>svg]:w-[10px] [&>svg]:h-[10px]">
                        <svg><use href="#note"/></svg>
                        <svg><use href="#note"/></svg>
                        <svg><use href="#note-on"/></svg>
                        <svg><use href="#note"/></svg>
                        <svg><use href="#note"/></svg>
                        <svg><use href="#note-stack"/></svg>
                        <svg><use href="#note-dash"/></svg>
                        <svg><use href="#clip"/></svg>
                    </div>
                </div>

                <!-- feature manager -->
                <aside class="w-[129px] bg-[#f7f7f7] border-r border-[#b5b8c0]">
                    <div class="flex items-center justify-center h-[13px] border-b border-[#a9b8b2]"><span class="w-[3px] h-[3px] rounded-full border border-[#888]"></span></div>
                    <div class="flex h-[14px] items-stretch [&>button]:flex [&>button]:items-center [&>button]:justify-center [&>button]:w-[21px] [&>button]:border-r [&>button]:border-[#a5a5a5]">
                        <button class="bg-[#f7f7f7]" aria-label="设计树"><svg class="w-[11px] h-[11px]"><use href="#part"/></svg></button>
                        <button class="bg-[#d2d2d2]" aria-label="属性"><svg class="w-[11px] h-[11px]"><use href="#form"/></svg></button>
                        <button class="bg-[#d2d2d2]" aria-label="配置"><svg class="w-[10px] h-[10px]"><use href="#config"/></svg></button>
                        <button class="bg-[#d2d2d2]" aria-label="尺寸专家"><svg class="w-[10px] h-[10px]"><use href="#target"/></svg></button>
                        <button class="bg-[#d2d2d2]" aria-label="外观"><svg class="w-[10px] h-[10px]"><use href="#ball"/></svg></button>
                        <span class="ml-auto mr-[3px] self-center"><svg class="w-2 h-2 rotate-90 text-[#333]"><use href="#up"/></svg></span>
                    </div>
                    <label class="flex items-center h-[14px] mx-[2px] pl-px bg-white border border-[#ccc]">
                        <svg class="w-[10px] h-[10px]"><use href="#funnel"/></svg>
                        <input class="flex-1 min-w-0 outline-none" type="text" aria-label="过滤">
                    </label>
                    <ul class="grid auto-rows-fr h-[141px] [&>li]:flex [&>li]:items-center [&>li]:gap-[3px] [&>li]:whitespace-nowrap [&_svg]:shrink-0">
                        <li class="pl-[2px]"><svg class="w-[10px] h-[10px]"><use href="#part"/></svg>零件1 (默认) &lt;&lt;默认&gt;_显示状态 1&gt;</li>
                        <li class="pl-1"><svg class="w-1 h-1 mr-px"><use href="#tri"/></svg><svg class="w-[10px] h-[10px]"><use href="#history"/></svg>History</li>
                        <li class="pl-3"><svg class="w-[10px] h-[10px]"><use href="#sensor"/></svg>传感器</li>
                        <li class="pl-1"><svg class="w-1 h-1 mr-px"><use href="#tri"/></svg><svg class="w-[10px] h-[10px]"><use href="#annot"/></svg>注解</li>
                        <li class="pl-1"><svg class="w-1 h-1 mr-px"><use href="#tri"/></svg><svg class="w-[10px] h-[10px]"><use href="#solid"/></svg>实体(1)</li>
                        <li class="pl-3"><svg class="w-[10px] h-[10px]"><use href="#material"/></svg>材质 &lt;未指定&gt;</li>
                        <li class="pl-3"><svg class="w-[10px] h-[10px]"><use href="#plane"/></svg>前视基准面</li>
                        <li class="pl-3"><svg class="w-[10px] h-[10px]"><use href="#plane"/></svg>上视基准面</li>
                        <li class="pl-3"><svg class="w-[10px] h-[10px]"><use href="#plane"/></svg>右视基准面</li>
                        <li class="pl-3"><svg class="w-[10px] h-[10px]"><use href="#origin"/></svg>原点</li>
                        <li class="pl-1"><svg class="w-1 h-1 mr-px"><use href="#tri"/></svg><svg class="w-[10px] h-[10px]"><use href="#box"/></svg>凸台-拉伸1</li>
                        <li class="pl-1 text-[#8a9aa6]"><svg class="w-1 h-1 mr-px"><use href="#tri"/></svg><span class="flex items-center gap-[3px] w-12 h-[11px] bg-[#a5cbe6]"><svg class="w-[10px] h-[10px] opacity-50"><use href="#box"/></svg>凸台-拉伸2</span></li>
                    </ul>
                    <div class="h-px bg-[#2f7fae]"></div>
                </aside>

                <!-- graphics area -->
                <div class="relative flex-1 min-w-0 flex justify-end border-b border-[#a0a4ae]">
                    <svg class="absolute inset-0 w-full h-full" viewBox="147 74 698 462">
                        <defs>
                            <linearGradient id="side">
                                <stop offset="0" stop-color="#b9b9b9"/>
                                <stop offset=".05" stop-color="#cfcfcf"/>
                                <stop offset=".15" stop-color="#fff"/>
                                <stop offset=".33" stop-color="#fff"/>
                                <stop offset=".44" stop-color="#b4b4b3"/>
                                <stop offset=".53" stop-color="#a1a2a0"/>
                                <stop offset=".68" stop-color="#a09b9f"/>
                                <stop offset=".79" stop-color="#c8b5cc"/>
                                <stop offset=".85" stop-color="#c9b7cd"/>
                                <stop offset=".92" stop-color="#a595a7"/>
                                <stop offset="1" stop-color="#908593"/>
                            </linearGradient>
                        </defs>
                        <g transform="translate(490 285) rotate(-10.500)" stroke="#333">
                            <path d="M-116 0V52A116 32 0 0 0 116 52V0z" fill="url(#side)"/>
                            <ellipse rx="116" ry="32" fill="#fff"/>
                        </g>
                        <path d="M499.500 337l-3-16" stroke="#2222e8"/>
                        <path d="M494.500 324.500l2-5 2.500 4.500z" fill="#2222e8"/>
                        <circle cx="499.500" cy="337" r="2" fill="#2222e8"/>
                    </svg>
                    <svg class="absolute left-0 bottom-[18px] w-8 h-9" viewBox="0 0 32 36">
                        <path d="M22 24l-3-12" stroke="#1f7a2a" stroke-width="2"/><path d="M16 15l2-6 4 5z" fill="#1f7a2a"/>
                        <path d="M22 24l-12 2" stroke="#2a2ad0" stroke-width="1.500"/><path d="M11 23.500l-6 3 6 2z" fill="#2a2ad0"/>
                        <circle cx="22.500" cy="26" r="2.500" fill="#c41c1c"/><path d="M20 23h3" stroke="#222"/>
                        <text x="16" y="7" font-size="6" fill="#3fa048">Y</text>
                        <text x="1" y="29" font-size="6" fill="#2a2ad0">Z</text>
                        <text x="20" y="33" font-size="5" fill="#e03030">X</text>
                    </svg>
                    <div class="relative flex flex-col self-start w-[14px] mt-[15px] [&>button]:flex [&>button]:items-center [&>button]:justify-center [&>button]:h-[13px] [&>button]:border [&>button]:border-[#aaa]">
                        <button class="bg-[#f7f7f7]" aria-label="资源"><svg class="w-[11px] h-[11px]"><use href="#home"/></svg></button>
                        <button class="bg-[#d2d2d2]" aria-label="设计库"><svg class="w-[10px] h-[10px]"><use href="#lib"/></svg></button>
                        <button class="bg-[#d2d2d2]" aria-label="文件探索器"><svg class="w-[11px] h-[11px]"><use href="#folder"/></svg></button>
                        <button class="bg-[#d2d2d2]" aria-label="视图调色板"><svg class="w-[10px] h-[10px]"><use href="#viewpal"/></svg></button>
                        <button class="bg-[#d2d2d2]" aria-label="外观、布景"><svg class="w-[10px] h-[10px]"><use href="#ball"/></svg></button>
                        <button class="bg-[#d2d2d2]" aria-label="自定义属性"><svg class="w-[11px] h-[11px]"><use href="#form"/></svg></button>
                    </div>
                </div>
            </div>

            <!-- document tabs -->
            <div class="flex h-2 shrink-0 pl-[17px] bg-[#f7f7f7]">
                <div class="flex items-center justify-around w-9 bg-[#a8a8a8] text-[#777] text-[6px]"><span>|◂</span><span>◂</span><span>▸</span><span>▸|</span></div>
                <button class="w-[26px] bg-[#f7f7f7]">模型</button>
                <button class="w-[31px] bg-[#d2d2d2] border-x border-[#aaa] whitespace-nowrap">3D 视图</button>
                <button class="w-[45px] bg-[#d2d2d2] border-r border-[#aaa] text-left pl-[3px] whitespace-nowrap">运动算例 1</button>
            </div>
        </div>

        <!-- task pane -->
        <aside class="relative w-[179px] border-l-2 border-[#74777d] bg-[#f7f7f7]">
            <div class="flex items-center h-3 px-[5px] bg-[#aeb0b5] border-b border-[#777]">
                <span class="text-[10px]">«</span>
                <h2 class="flex-1 text-center text-[6px] font-bold text-black">SOLIDWORKS 资源</h2>
                <svg class="w-[9px] h-[9px] mr-[2px]"><use href="#gear"/></svg>
                <svg class="w-[7px] h-[7px] text-[#222]"><use href="#pin"/></svg>
            </div>
            <div class="pl-[7px] pr-[14px] text-[6px] text-[#666]">
                <a href="#" class="flex items-center gap-[3px] h-[11px] mt-[14px]"><svg class="w-[10px] h-[10px]"><use href="#home"/></svg>欢迎使用&nbsp; SOLIDWORKS</a>
                <section class="mt-[14px] border-t border-[#999]">
                    <h3 class="flex items-center justify-between h-[11px] pr-1 font-semibold text-[#444]">SOLIDWORKS 工具<svg class="w-[6px] h-[6px]"><use href="#up"/></svg></h3>
                    <ul class="[&_a]:flex [&_a]:items-center [&_a]:gap-[2px] [&_a]:h-[15px] [&_svg]:w-[11px] [&_svg]:h-[11px]">
                        <li><a href="#"><svg><use href="#redtab"/></svg>属性标签编制程序</a></li>
                        <li><a href="#"><svg><use href="#redrx"/></svg>SOLIDWORKS Rx</a></li>
                        <li><a href="#"><svg><use href="#redgauge"/></svg>性能基准测试</a></li>
                        <li><a href="#"><svg><use href="#compare"/></svg>比较我的评分</a></li>
                        <li><a href="#"><svg><use href="#copyset"/></svg>复制设置向导</a></li>
                        <li><a href="#"><svg><use href="#products"/></svg>我的产品</a></li>
                    </ul>
                </section>
                <section class="mt-[13px] border-t border-[#bbb]">
                    <h3 class="flex items-center justify-between h-[11px] pr-1 font-semibold text-[#444]">在线资源<svg class="w-[6px] h-[6px]"><use href="#up"/></svg></h3>
                    <ul class="[&_a]:flex [&_a]:items-center [&_a]:gap-[2px] [&_a]:h-[15px] [&_svg]:w-[11px] [&_svg]:h-[11px]">
                        <li><a href="#"><svg><use href="#globe"/></svg>3DEXPERIENCE Marketplace</a></li>
                        <li><a href="#"><svg><use href="#hands"/></svg>Partner Solutions</a></li>
                    </ul>
                </section>
                <section class="mt-[13px] border-t border-[#bbb]">
                    <h3 class="flex items-center justify-between h-[11px] pr-1 font-semibold text-[#444]">订阅服务<svg class="w-[6px] h-[6px]"><use href="#up"/></svg></h3>
                    <a href="#" class="flex items-center gap-[2px] h-[15px]"><svg class="w-[11px] h-[11px]"><use href="#subs"/></svg>订阅服务</a>
                </section>
            </div>
            <div class="absolute right-px bottom-[92px] w-1 h-[30px] rounded-sm bg-[#555] border-b-8 border-[#4f9a63]"></div>
        </aside>
    </main>

    <!-- status bar -->
    <footer class="flex items-center h-[10px] shrink-0 border-t border-[#888] pl-px">
        <span>将压缩的特征或零部件放回到模型。</span>
        <svg class="w-2 h-2 ml-auto" viewBox="0 0 16 16"><path d="M1 8h9l4 6H1z" fill="#d9a43a"/><path d="M4 2h4v6H4z" fill="#a5701c"/><path d="M9 8l6-6M12 1l3 4" stroke="#333" stroke-width="2"/><path d="M2 15h12" stroke="#2f7ea3" stroke-width="2"/></svg>
        <span class="ml-[38px]">自定义</span>
        <svg class="w-1 h-1 ml-2 rotate-180"><use href="#down"/></svg>
        <svg class="w-[9px] h-[9px] ml-[14px] mr-px" viewBox="0 0 16 16"><path d="M1 7l6-4 7 2v5l-6 4-6-3z" fill="#ddd" stroke="#555" stroke-width="1.500"/><circle cx="10" cy="8" r="3" fill="none" stroke="#555" stroke-width="1.500"/></svg>
    </footer>

    <!-- windows taskbar -->
    <div class="flex items-center h-[21px] shrink-0 bg-[#1f1f1f] text-white">
        <button class="flex justify-center w-[26px]" aria-label="开始"><svg class="w-[9px] h-[9px]" viewBox="0 0 16 16"><path d="M0 2l7-1v7H0zM8 1l8-1v8H8zM0 9h7v6l-7-1zM8 9h8v7l-8-1z" fill="#fff"/></svg></button>
        <button class="flex justify-center w-[26px]" aria-label="搜索"><svg class="w-[9px] h-[9px] -scale-x-100"><use href="#magnify"/></svg></button>
        <button class="flex justify-center w-[26px]" aria-label="助手"><span class="w-[9px] h-[9px] rounded-full border border-white"></span></button>
        <button class="flex justify-center w-[26px]" aria-label="应用"><svg class="w-3 h-3" viewBox="0 0 16 16"><circle cx="5" cy="4" r="3.500" fill="#fff"/><circle cx="12" cy="5" r="3.500" fill="#fff"/><circle cx="11" cy="12" r="3.500" fill="#fff"/><circle cx="4" cy="11" r="3.500" fill="#fff"/><path d="M8 8c-3 0-3-3-7-2M8 8c0-3 3-3 2-7M8 8c3 0 3 3 7 2M8 8c0 3-3 3-2 7" fill="none" stroke="#1f1f1f" stroke-width="1.300"/></svg></button>
        <span class="w-px h-[10px] ml-[5px] mr-[10px] bg-[#444]"></span>
        <button class="flex items-center justify-center w-[21px] h-full border-b border-[#76b9ed]" aria-label="Edge"><svg class="w-[13px] h-[13px]" viewBox="0 0 16 16"><circle cx="8" cy="8" r="7.500" fill="#1e7fd0"/><path d="M1 7C2-1 15-1 15.500 7c0 3-4 4-6 2 1-3-4-5-8.500-2z" fill="#43c6a0"/><path d="M5 9c0-3 4-3 4-1-1 4 3 4 5 4-3 5-9 3-9-3z" fill="#0f4f96"/><path d="M9 7c2 3 5 2 6 1" fill="none" stroke="#1f1f1f" stroke-width="1.500"/></svg></button>
        <button class="flex items-center justify-center w-[25px] h-full ml-[3px] bg-[#4a4a4a] border-b border-[#76b9ed]" aria-label="SOLIDWORKS">
            <span class="flex flex-col items-center justify-center w-[13px] h-[14px] rounded-sm bg-[#c41e25] text-[6px] leading-[6px] font-bold"><span>SW</span><span class="text-[5px]">2022</span></span>
        </button>
        <div class="flex items-center ml-auto mr-2">
            <span class="w-[11px] h-[11px] rounded-full bg-[#f08a24]"></span>
            <svg class="w-3 h-3 -ml-[2px]" viewBox="0 0 16 16"><circle cx="7" cy="8" r="7" fill="#2b8fd6"/><path d="M4 6c0-4 6-3 5 0-.5 2-2 2-2 4M7 11v2" fill="none" stroke="#fff" stroke-width="1.800"/><circle cx="13" cy="12" r="3" fill="#f6c443"/></svg>
            <span class="-ml-[3px]">3°C</span>
            <span class="flex flex-col items-center -ml-[3px] leading-[7px] whitespace-nowrap"><span>74℃</span><span>CPU温度</span></span>
        </div>
        <svg class="w-2 h-2 shrink-0"><use href="#up"/></svg>
        <svg class="w-[9px] h-[9px] ml-1 shrink-0" viewBox="0 0 16 16"><circle cx="8" cy="8" r="8" fill="#f2e12e"/><path d="M8 3v10M3 8h10" stroke="#2c9f36" stroke-width="3"/></svg>
        <svg class="w-[10px] h-[10px] ml-[3px] shrink-0" viewBox="0 0 16 16"><path d="M4 5h10v7H4z" fill="#fff" stroke="#fff"/><path d="M1 3v3h3V3M2 6v5h3" fill="none" stroke="#fff"/></svg>
        <svg class="w-[10px] h-[10px] ml-[3px] shrink-0" viewBox="0 0 16 16"><path d="M1 6h3l4-4v12l-4-4H1z" fill="none" stroke="#ddd"/><path d="M10 5c2 2 2 4 0 6M12 3c3 3 3 7 0 10" fill="none" stroke="#999"/></svg>
        <svg class="w-[10px] h-[10px] ml-[5px] shrink-0" viewBox="0 0 16 16"><path d="M2 13c-2-3 3-5 4-3s-3 5-4 3l12-11M8 9c4-2 6 1 4 3s-4 0-3-2" fill="none" stroke="#fff" stroke-width="1.300"/></svg>
        <span class="ml-[5px] text-[8px]">中</span>
        <svg class="w-[9px] h-[9px] ml-[7px] shrink-0" viewBox="0 0 16 16"><rect width="16" height="16" rx="3" fill="#ee4b24"/><path d="M12 4C7 2 4 5 8 8s2 6-4 4" fill="none" stroke="#fff" stroke-width="2"/></svg>
        <div class="ml-[6px] w-[38px] text-center leading-[9px]">8:50 周六<br>2022/11/19</div>
        <button class="flex items-center ml-[6px] mr-[2px] pr-2 h-full border-r border-[#555]" aria-label="通知"><svg class="w-3 h-3" viewBox="0 0 16 16"><path d="M1 1h12v9H6l-3 3v-3H1z" fill="#fff"/><path d="M3 4h8M3 7h8" stroke="#333"/><circle cx="12" cy="11" r="4" fill="#333" stroke="#aaa"/><path d="M12 9v4" stroke="#fff"/></svg></button>
    </div>

    <!-- context toolbar -->
    <div class="absolute z-20 left-[61px] top-[209px] w-[100px] h-[37px] bg-[#f7f7f7] border border-[#bbb] border-r-2 border-b-2 border-r-[#888] border-b-[#888]">
        <div class="grid grid-cols-6 auto-rows-[17px] pt-px place-items-center">
            <button aria-label="编辑特征"><svg class="w-[11px] h-[11px]"><use href="#editfeat"/></svg></button>
            <button aria-label="编辑草图"><svg class="w-[11px] h-[11px]"><use href="#editsketch"/></svg></button>
            <button class="flex items-center justify-center w-[19px] h-[18px] border-2 border-[#ed1c24] bg-white" aria-label="解除压缩"><svg class="w-[11px] h-[11px]"><use href="#unsuppress"/></svg></button>
            <button aria-label="退回"><svg class="w-[9px] h-[9px]"><use href="#rollback"/></svg></button>
            <span></span><span></span>
            <button aria-label="放大所选"><svg class="w-[11px] h-[11px]"><use href="#zoomfit"/></svg></button>
            <button aria-label="正视于"><svg class="w-[11px] h-[11px]"><use href="#normal"/></svg></button>
            <button aria-label="外观"><svg class="w-[11px] h-[11px]"><use href="#ball"/></svg></button>
        </div>
        <div class="absolute left-[44px] top-[26px] px-[2px] py-px leading-[9px] whitespace-nowrap bg-[#f7f7f7] border border-[#888] text-[#666]" role="tooltip">解除压缩</div>
    </div>

    <!-- context menu -->
    <div class="absolute z-10 left-[61px] top-[252px] w-[100px] bg-[#f7f7f7] border border-[#bbb] border-r-2 border-b-2 border-r-[#888] border-b-[#888]">
        <h3 class="h-[13px] pl-px leading-[13px] font-bold text-black">特征 (凸台-拉伸2)</h3>
        <div class="grid auto-rows-fr h-[115px] [&>button]:flex [&>button]:items-center [&>button]:px-[3px] [&>button>span]:flex-1 [&>button>span]:text-left [&>button]:whitespace-nowrap">
            <button class="pl-[17px]!"><span>评论</span><svg class="w-1 h-1"><use href="#tri"/></svg></button>
            <button class="pl-[17px]!"><span>父子关系... (<u>G</u>)</span></button>
            <button class="gap-1"><svg class="w-[10px] h-[10px]"><use href="#configfeat"/></svg><span>配置特征 (<u>H</u>)</span></button>
            <button class="gap-1"><svg class="w-[10px] h-[10px]"><use href="#delete"/></svg><span>删除... (<u>J</u>)</span></button>
            <button class="gap-1"><svg class="w-[10px] h-[10px]"><use href="#fav"/></svg><span>添加到收藏 (<u>K</u>)</span></button>
            <button class="pl-[17px]!"><span>保存选择</span><svg class="w-1 h-1"><use href="#tri"/></svg></button>
            <button class="gap-1"><svg class="w-[10px] h-[10px]"><use href="#bluefolder"/></svg><span>添加到新文件夹 (<u>N</u>)</span></button>
            <button class="gap-1"><svg class="w-[10px] h-[10px]"><use href="#props"/></svg><span>特征属性... (<u>P</u>)</span></button>
            <button class="gap-1"><svg class="w-[10px] h-[10px]"><use href="#transp"/></svg><span>更改透明度 (<u>Q</u>)</span></button>
        </div>
        <div class="ml-4 border-t border-[#d4d4d4]"></div>
        <div class="grid auto-rows-fr h-[77px] [&>button]:flex [&>button]:items-center [&>button]:pl-[17px] [&>button]:pr-[3px] [&>button>span]:flex-1 [&>button>span]:text-left [&>button]:whitespace-nowrap">
            <button><span>Feature<u>W</u>orks...</span><svg class="w-1 h-1"><use href="#tri"/></svg></button>
            <button><span>转到... (<u>T</u>)</span></button>
            <button><span>生成新文件夹 (<u>U</u>)</span></button>
            <button><span>重命名树项目 (<u>W</u>)</span></button>
            <button><span>隐藏/显示树项目... (<u>X</u>)</span></button>
            <button><span>折叠项目 (<u>Y</u>)</span></button>
        </div>
        <div class="ml-4 border-t border-[#d4d4d4]"></div>
        <button class="flex flex-col items-center justify-center w-full h-[15px]" aria-label="展开"><svg class="w-1 h-[3px]" viewBox="0 0 10 6"><path d="M1 1l4 4 4-4" fill="none" stroke="#222" stroke-width="2"/></svg><svg class="w-1 h-[3px]" viewBox="0 0 10 6"><path d="M1 1l4 4 4-4" fill="none" stroke="#222" stroke-width="2"/></svg></button>
    </div>
</body>
</html>
